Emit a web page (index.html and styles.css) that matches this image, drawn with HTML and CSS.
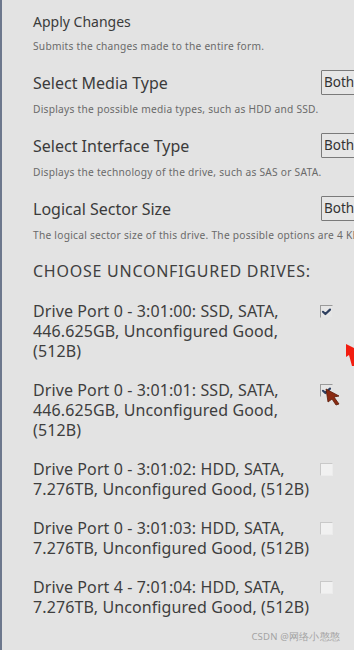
FILE: index.html
```html
<!DOCTYPE html>
<html lang="en">
<head>
    <meta charset="UTF-8">
    <meta name="viewport" content="width=device-width, initial-scale=1.0">
    <title>Virtual Disk Settings</title>
    <link rel="stylesheet" href="styles.css">
</head>
<body>
    <main class="panel">
        <div class="setting setting-apply">
            <div class="setting-title small">Apply Changes</div>
            <div class="setting-desc">Submits the changes made to the entire form.</div>
        </div>
        <div class="setting">
            <div class="setting-head">
                <div class="setting-title">Select Media Type</div>
                <div class="select-box">Both</div>
            </div>
            <div class="setting-desc">Displays the possible media types, such as HDD and SSD.</div>
        </div>
        <div class="setting">
            <div class="setting-head">
                <div class="setting-title">Select Interface Type</div>
                <div class="select-box">Both</div>
            </div>
            <div class="setting-desc">Displays the technology of the drive, such as SAS or SATA.</div>
        </div>
        <div class="setting">
            <div class="setting-head">
                <div class="setting-title">Logical Sector Size</div>
                <div class="select-box">Both</div>
            </div>
            <div class="setting-desc">The logical sector size of this drive. The possible options are 4 KB and 512 bytes.</div>
        </div>

        <h2 class="drives-title">CHOOSE UNCONFIGURED DRIVES:</h2>
        <ul class="drive-list">
            <li class="drive">
                <span class="drive-name">Drive Port 0 - 3:01:00: SSD, SATA, 446.625GB, Unconfigured Good, (512B)</span>
                <span class="check checked">
                    <svg viewBox="0 0 13 13" width="13" height="13"><path d="M3 6.8 L5.4 9 L10 4.6" fill="none" stroke="#2e3f5f" stroke-width="2.2" stroke-linecap="round" stroke-linejoin="round"/></svg>
                </span>
            </li>
            <li class="drive">
                <span class="drive-name">Drive Port 0 - 3:01:01: SSD, SATA, 446.625GB, Unconfigured Good, (512B)</span>
                <span class="check checked">
                    <svg viewBox="0 0 13 13" width="13" height="13"><path d="M3 6.8 L5.4 9 L10 4.6" fill="none" stroke="#2e3f5f" stroke-width="2.2" stroke-linecap="round" stroke-linejoin="round"/></svg>
                </span>
            </li>
            <li class="drive">
                <span class="drive-name">Drive Port 0 - 3:01:02: HDD, SATA, 7.276TB, Unconfigured Good, (512B)</span>
                <span class="check"></span>
            </li>
            <li class="drive">
                <span class="drive-name">Drive Port 0 - 3:01:03: HDD, SATA, 7.276TB, Unconfigured Good, (512B)</span>
                <span class="check"></span>
            </li>
            <li class="drive">
                <span class="drive-name">Drive Port 4 - 7:01:04: HDD, SATA, 7.276TB, Unconfigured Good, (512B)</span>
                <span class="check"></span>
            </li>
        </ul>
        <div class="watermark">CSDN @网络小憨憨</div>
    </main>

    <!-- annotation arrow and mouse pointer from the screenshot -->
    <svg class="red-arrow" viewBox="0 0 12 22" width="12" height="22">
        <path d="M0 0 L12 6 L8 9 L12 22 L6 22 L3 11 L0 13 Z" fill="#f21d10"/>
    </svg>
    <svg class="pointer" viewBox="0 0 16 18" width="16" height="18">
        <path d="M1 1 L14 8 L9 9 L14 16 L11 17 L7 11 L3 14 Z" fill="#8a2a12" stroke="#5a1a08" stroke-width="0.8"/>
    </svg>
</body>
</html>
```

FILE: styles.css
```css
html, body {
    margin: 0;
    padding: 0;
    overflow: hidden;
}
body {
    font-family: 'Noto Sans', 'Open Sans', sans-serif;
    background-color: #e3e3e3;
    color: #3d3d3d;
    width: 354px;
    height: 650px;
    border-left: 2px solid #6d788d;
    box-sizing: border-box;
    position: relative;
}
.panel {
    padding: 12px 0 0 31px;
    width: 480px;
}
.setting {
    margin-bottom: 17px;
}
.setting-apply {
    margin-bottom: 17px;
}
.setting-head {
    display: grid;
    grid-template-columns: 288px auto;
    align-items: center;
    height: 25px;
}
.setting-title {
    font-size: 16px;
    line-height: 22px;
    color: #3b3b3b;
}
.setting-title.small {
    font-size: 14px;
    line-height: 20px;
}
.setting-desc {
    font-size: 10.2px;
    line-height: 14px;
    letter-spacing: 0.25px;
    color: #6a6a6a;
    margin-top: 7px;
    white-space: nowrap;
}
.select-box {
    width: 60px;
    height: 25px;
    border: 1px solid #7a7a7a;
    box-sizing: border-box;
    font-size: 13.5px;
    line-height: 23px;
    padding-left: 2px;
    color: #333;
    background: #e6e6e6;
    border-radius: 1px;
}
.drives-title {
    margin: 19px 0 20px;
    font-size: 16px;
    line-height: 20px;
    font-weight: 400;
    color: #404040;
    letter-spacing: 0.75px;
}
.drive-list {
    list-style: none;
    margin: 0;
    padding: 0;
}
.drive {
    display: grid;
    grid-template-columns: 287px 13px;
    margin-bottom: 19px;
}
.drive-name {
    font-size: 16px;
    line-height: 20px;
    letter-spacing: 0.1px;
    color: #3e3e3e;
}
.check {
    width: 13px;
    height: 13px;
    margin-top: 4px;
    box-sizing: border-box;
    background: #f1f1f1;
    border-top: 1px solid #c9c9c9;
    border-left: 1px solid #c9c9c9;
    border-right: 1px solid #ececec;
    border-bottom: 1px solid #ececec;
}
.check.checked {
    background: #e6e6e6;
    border-top-color: #9a9a9a;
    border-left-color: #9a9a9a;
    border-right-color: #e3e3e3;
    border-bottom-color: #e3e3e3;
}
.check svg {
    display: block;
    margin: -1px 0 0 -1px;
}
.watermark {
    font-size: 9.5px;
    color: #a3a3a3;
    text-align: right;
    width: 307px;
    margin-top: -6px;
    letter-spacing: 0.2px;
}
.red-arrow {
    position: absolute;
    left: 344px;
    top: 344px;
}
.pointer {
    position: absolute;
    left: 323px;
    top: 388px;
}
```
